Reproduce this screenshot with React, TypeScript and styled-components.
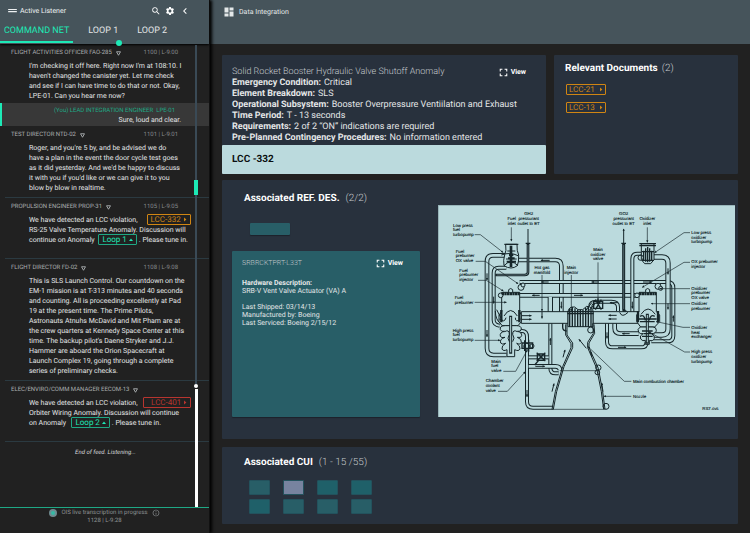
import React from "react";
import styled, { createGlobalStyle, css } from "styled-components";
import {
  MdChevronLeft,
  MdDashboard,
  MdDragHandle,
  MdFullscreen,
  MdInfoOutline,
  MdSearch,
  MdSettings,
} from "react-icons/md";

const color = {
  page: "#212121",
  bar: "#46545b",
  panel: "#28313d",
  teal: "#285e67",
  pale: "#bbdadd",
  mint: "#1de9b6",
  green: "#1fa885",
  orange: "#d08513",
  red: "#b8352f",
  ink: "#16262a",
};

const GlobalStyle = createGlobalStyle`
  * { box-sizing: border-box; }
  body {
    margin: 0;
    background: ${color.page};
    color: #e4e6e7;
    font-family: Roboto, sans-serif;
    font-size: 7px;
    line-height: 10px;
    text-rendering: geometricPrecision;
  }
  button { font: inherit; color: inherit; background: none; border: 0; padding: 0; cursor: pointer; text-rendering: inherit; }
  h1, h2, h3, p, dl, dd { margin: 0; font: inherit; }
  a { color: inherit; text-decoration: none; }
  svg { flex: none; }
`;

const Page = styled.div`
  display: grid;
  grid-template-columns: 28% 1fr;
  min-height: 100vh;
`;

/* ---------- Listener sidebar ---------- */

const Sidebar = styled.aside`
  display: flex;
  flex-direction: column;
  min-width: 0;
  z-index: 1;
  border-right: 1px solid #111;
  box-shadow: 2px 0 3px #000;
  background: ${color.page};
`;

const SidebarHeader = styled.header`
  background: ${color.bar};
  height: 44px;
  box-shadow: 0 1px 2px #000;
`;

const TitleRow = styled.div`
  display: flex;
  align-items: center;
  height: 21px;
  padding: 0 18px 0 6px;
  gap: 1px;
  color: #eef1f2;
`;

const Tools = styled.div`
  display: flex;
  align-items: center;
  gap: 4px;
  margin-left: auto;
`;

const IconButton = styled.button`
  display: flex;
  color: #fff;
`;

const Tabs = styled.nav`
  display: flex;
  height: 22px;
`;

const Tab = styled.button<{ $active?: boolean }>`
  position: relative;
  padding: 0 4px;
  margin-right: 11px;
  font-size: 9px;
  line-height: 20px;
  border-bottom: 2px solid transparent;
  ${(p) => p.$active && css`
    color: ${color.mint};
    border-color: ${color.mint};
  `}
`;

const TabDot = styled.span`
  position: absolute;
  right: 0;
  bottom: -5px;
  width: 6px;
  height: 6px;
  border-radius: 50%;
  background: ${color.mint};
`;

const Feed = styled.div`
  position: relative;
  flex: 1;
`;

const Message = styled.article<{ $roomy?: boolean }>`
  margin-left: 5px;
  padding: 4px 0 ${(p) => (p.$roomy ? 13 : 4)}px 6px;
  border-bottom: 1px solid #2b3a41;
  &:first-child {
    padding-bottom: 2px;
    border-bottom: 0;
  }
`;

const Meta = styled.header`
  display: flex;
  align-items: center;
  gap: 4px;
  padding-right: 31px;
  margin-bottom: 3px;
  font-size: 6px;
  color: #a9adaf;
  white-space: nowrap;
`;

const Time = styled.time`
  margin-left: auto;
  color: #85898b;
`;

const Speech = styled.p`
  padding-left: 18px;
  white-space: pre;
`;

const OwnMessage = styled.article`
  display: flex;
  flex-direction: column;
  align-items: flex-end;
  padding: 3px 28px 0 0;
  height: 23px;
  border-left: 2px solid ${color.mint};
  background: #383838;
`;

const OwnName = styled.span`
  padding-right: 6px;
  font-size: 6px;
  line-height: 9px;
  color: ${color.green};
`;

const tones = { orange: color.orange, red: color.red, green: color.mint };

const Tag = styled.a<{ $tone: keyof typeof tones; $wide?: boolean }>`
  margin: 0 2px;
  padding: 0 3px 0 ${(p) => (p.$wide ? 7 : 3)}px;
  border: 1px solid ${(p) => (p.$tone === "green" ? color.green : tones[p.$tone])};
  border-radius: 1px;
  font-size: 8px;
  line-height: 8px;
  color: ${(p) => tones[p.$tone]};
`;

const FeedEnd = styled.p`
  padding: 6px 0 0 2px;
  text-align: center;
  font-size: 6px;
  font-style: italic;
  color: #d5d8d9;
`;

const Rail = styled.div`
  position: absolute;
  inset: 1px 11px 0 auto;
  width: 4px;
  display: flex;
  flex-direction: column;
  align-items: center;
  pointer-events: none;
`;

const RailPart = styled.span<{ $grow?: number }>`
  width: 2px;
  flex: ${(p) => p.$grow ?? 1} 0 0;
  background: #3a4a56;
`;

const RailThumb = styled.span`
  width: 4px;
  height: 15px;
  background: ${color.mint};
`;

const RailDot = styled.span`
  width: 4px;
  height: 4px;
  margin-bottom: 1px;
  border-radius: 50%;
  background: #fff;
`;

const RailEnd = styled.span`
  width: 3px;
  height: 118px;
  background: #fff;
`;

const Status = styled.footer`
  display: flex;
  flex-direction: column;
  align-items: center;
  height: 26px;
  border-top: 1px solid ${color.green};
  font-size: 6px;
  line-height: 8px;
  color: #8d9193;
  padding-top: 1px;
`;

const StatusLine = styled.div`
  display: flex;
  align-items: center;
  gap: 4px;
`;

const LiveDot = styled.span`
  width: 8px;
  height: 8px;
  border-radius: 50%;
  border: 2px solid #6f8b90;
  background: #35b9a4;
`;

/* ---------- Data integration area ---------- */

const Main = styled.main`
  min-width: 0;
  display: flex;
  flex-direction: column;
`;

const MainHeader = styled.header`
  display: flex;
  align-items: flex-start;
  gap: 4px;
  height: 44px;
  padding: 6px 13px;
  background: ${color.bar};
  line-height: 12px;
  color: #e4e8e9;
`;

const Board = styled.div`
  display: flex;
  flex-direction: column;
  gap: 6px;
  padding: 11px 12px 9px;
`;

const TopRow = styled.div`
  display: grid;
  grid-template-columns: 324fr 184fr;
  gap: 8px;
`;

const Panel = styled.section`
  min-width: 0;
  border-radius: 1px;
  background: ${color.panel};
`;

const Anomaly = styled(Panel)`
  padding-top: 11px;
  font-size: 9px;
  line-height: 11px;
`;

const CardTitle = styled.div`
  display: flex;
  justify-content: space-between;
  align-items: center;
  height: 12px;
  white-space: nowrap;
`;

const AnomalyBody = styled.div`
  padding: 0 10px 1px;
  ${CardTitle} { padding-right: 10px; }
`;

const Light = styled.span`
  font-weight: 300;
  color: #c3c8cb;
`;

const Fact = styled.div`
  display: flex;
  gap: 3px;
  white-space: nowrap;
  dt { font-weight: 700; }
`;

const ViewButton = styled.button`
  display: flex;
  align-items: center;
  gap: 1px;
  font-size: 7px;
  line-height: 10px;
  font-weight: 700;
  color: #fff;
`;

const Limit = styled.div`
  padding: 0 10px;
  border-radius: 1px;
  background: ${color.pale};
  color: #0b0f10;
  font-size: 10px;
  font-weight: 700;
  line-height: 29px;
`;

const Heading = styled.h2`
  display: flex;
  gap: 6px;
  font-size: 10px;
  line-height: 14px;
  font-weight: 700;
  color: #fff;
  white-space: nowrap;
`;

const Documents = styled(Panel)`
  padding: 7px 11px;
  ${Heading} { gap: 4px; }
`;

const DocList = styled.div`
  display: flex;
  flex-direction: column;
  align-items: flex-start;
  gap: 7px;
  padding: 8px 1px;
`;

const DocLink = styled.a`
  display: flex;
  align-items: center;
  justify-content: space-between;
  width: 40px;
  height: 11px;
  padding: 0 2px;
  border: 1px solid ${color.orange};
  border-radius: 1px;
  font-size: 8px;
  color: ${color.orange};
`;

const References = styled(Panel)`
  display: grid;
  grid-template-columns: 188fr 297fr;
  gap: 18px;
  padding: 12px 3px 22px 10px;
`;

const RefColumn = styled.div`
  display: flex;
  flex-direction: column;
  min-width: 0;
  ${Heading} { padding-left: 12px; }
`;

const Chip = styled.button`
  width: 40px;
  height: 12px;
  margin: 17px 18px 16px;
  border-radius: 1px;
  background: ${color.teal};
  box-shadow: 0 1px 1px #1c222b;
`;

const Hardware = styled.section`
  flex: 1;
  padding: 4px 10px;
  border-radius: 1px;
  background: ${color.teal};
  box-shadow: 0 1px 1px #1c222b;
  line-height: 8px;
  ${CardTitle} { height: 16px; padding-right: 7px; }
  p { margin-top: 8px; }
`;

const Figure = styled.figure`
  margin: 13px 0 0;
  background: ${color.pale};
  svg { display: block; width: 100%; height: auto; }
`;

const Cui = styled(Panel)`
  margin-top: 2px;
  padding: 8px 22px 10px;
  ${Heading} { line-height: 15px; }
`;

const Tiles = styled.div`
  display: grid;
  grid-template-columns: repeat(4, 21px);
  gap: 4px 13px;
  padding: 10px 5px 0;
`;

const Tile = styled.button<{ $shade: string }>`
  height: 15px;
  border: 1px solid #23525d;
  border-radius: 1px;
  background: ${(p) => p.$shade};
`;

/* ---------- Small drawings ---------- */

const Nabla = () => (
  <svg width="5" height="5" viewBox="0 0 10 10" aria-hidden="true">
    <path d="M1 1.5h8L5 8.5z" fill="none" stroke="#b4b8ba" strokeWidth="1.7" />
  </svg>
);

const Caret = ({ up }: { up?: boolean }) => (
  <svg width="4" height="5" viewBox="0 0 4 5" aria-hidden="true">
    <path d={up ? "M0 4L2 1.5L4 4z" : "M1 .5L3.4 2.5L1 4.5z"} fill="currentColor" />
  </svg>
);

const View = () => (
  <ViewButton>
    <MdFullscreen size={13} />
    View
  </ViewButton>
);

/* ---------- Engine schematic ---------- */

const Pipe = ({ d, w = 12 }: { d: string; w?: number }) => (
  <>
    <path d={d} fill="none" stroke={color.ink} strokeWidth={w} />
    <path d={d} fill="none" stroke={color.pale} strokeWidth={w - 6} />
  </>
);

const labels: [number, number, string[], ("start" | "middle")?][] = [
  [45, 65, ["Low press", "fuel", "turbopump"]],
  [53, 143, ["Fuel", "preburner", "OX valve"]],
  [64, 200, ["Fuel", "preburner", "injector"]],
  [50, 282, ["Fuel", "preburner"]],
  [44, 380, ["High press", "fuel", "turbopump"]],
  [160, 473, ["Main", "fuel", "valve"]],
  [143, 532, ["Chamber", "coolant", "valve"]],
  [221, 46, ["Fuel", "inlet"], "middle"],
  [272, 31, ["GH2", "pressurant", "outlet to ET"], "middle"],
  [312, 192, ["Hot gas", "manifold"], "middle"],
  [400, 192, ["Main", "injector"], "middle"],
  [480, 138, ["Main", "oxidizer", "valve"], "middle"],
  [557, 31, ["GO2", "pressurant", "outlet to ET"], "middle"],
  [628, 46, ["Oxidizer", "inlet"], "middle"],
  [760, 87, ["Low press", "oxidizer", "turbopump"]],
  [760, 175, ["OX preburner", "injector"]],
  [760, 254, ["Oxidizer", "preburner", "OX valve"]],
  [760, 301, ["Oxidizer", "preburner"]],
  [760, 372, ["Oxidizer", "heat", "exchanger"]],
  [760, 445, ["High press", "oxidizer", "turbopump"]],
  [585, 534, ["Main combustion chamber"]],
  [585, 579, ["Nozzle"]],
  [793, 616, ["RS7.cvs"]],
];

const flow = [
  "M335 166h-26", "M332 231h-22", "M305 271h-22", "M408 271h26", "M483 231h-22",
  "M615 231h26", "M540 293h-24", "M252 332h28", "M252 343h28", "M536 331h-24",
  "M536 342h-24", "M147 205v20", "M167 275v20", "M147 375v20", "M370 290v20",
  "M583 290v20", "M690 190v18", "M690 295v18", "M337 420v-20", "M267 555v20",
  "M292 484h28", "M375 457l6-22", "M342 560l6-24", "M495 560l-4-26", "M575 386h-22",
  "M540 427h24", "M507 382v18", "M706 350v-18", "M445 430l-22-27", "M462 455l-4-15",
  "M312 320v20",
];

const leaders = [
  "M110 89H127L195 142", "M113 169H142L240 236", "M120 226H145L196 258", "M110 292H205",
  "M110 406H186", "M196 499H233L268 435", "M180 559H208L262 500", "M220 67V108",
  "M312 210V318", "M400 210V318", "M480 172V292", "M628 67V112", "M756 83H738L650 143",
  "M756 172H738L613 247", "M756 251H665", "M756 296H640", "M756 367H735L655 350",
  "M756 441H740L632 380", "M580 529H559L450 425", "M580 574H498",
];

const Engine = () => (
  <svg viewBox="0 0 891 636" role="img" aria-label="Engine flow schematic">
    <defs>
      <marker id="tip" viewBox="0 0 10 10" refX="8" refY="5" markerWidth="10" markerHeight="8" markerUnits="userSpaceOnUse" orient="auto">
        <path d="M0 1L10 5L0 9z" fill={color.ink} />
      </marker>
      <marker id="point" viewBox="0 0 10 10" refX="8" refY="5" markerWidth="8" markerHeight="8" markerUnits="userSpaceOnUse" orient="auto">
        <path d="M0 1L10 5L0 9z" fill={color.ink} />
      </marker>
    </defs>
    <path d="M1 636V1H891" fill="none" stroke="#7e989d" strokeWidth="2" />

    <Pipe d="M205 151H165Q147 151 147 169V430Q147 450 167 450H206" w={14} />
    <Pipe d="M205 188H182Q167 188 167 204V345Q167 360 185 362" />
    <Pipe d="M238 165H352Q370 165 370 183V322" w={14} />
    <Pipe d="M245 231H688Q706 231 706 249V392Q706 409 688 409H640" />
    <Pipe d="M245 271H600" w={14} />
    <Pipe d="M337 276V322" w={16} />
    <Pipe d="M610 146H598Q583 146 583 162V322" />
    <Pipe d="M648 156H672Q690 156 690 174V372Q690 390 672 390H640" w={16} />
    <Pipe d="M507 355V410Q507 427 524 427H610Q626 427 626 410" />
    <Pipe d="M530 355V370Q530 386 548 386H602" w={14} />
    <Pipe d="M457 318V305Q457 290 474 290H520Q540 290 540 306V318" />
    <Pipe d="M245 378H252Q267 378 267 396V590Q267 608 285 608H346" />
    <Pipe d="M337 355V488Q337 505 353 505H362" />
    <Pipe d="M272 457H332" />
    <Pipe d="M272 484H352Q366 484 366 496" w={14} />
    <path d="M270 115V202Q270 210 260 210H172" fill="none" stroke={color.ink} strokeWidth="8" />
    <path d="M270 120V202Q270 210 260 210H176" fill="none" stroke="#789094" strokeWidth="2" />
    <path d="M557 115V312Q557 322 566 322" fill="none" stroke={color.ink} strokeWidth="9" />
    <path d="M557 120V312" stroke="#6d858a" strokeWidth="2" />

    <g fill="none" stroke={color.ink} strokeWidth="3">
      <path d="M270 115V72M557 115V72" markerEnd="url(#tip)" />
      <path d="M263 115H277M550 115H564" strokeWidth="4" />
      <g fill={color.pale}>
        <path d="M250 320H390V355H250zM465 320H602V355H465z" />
        <path d="M191 262H245V320L250 330V350L240 362H192L183 350V330L191 320zM603 262H655V320L665 330V350L650 366H608L596 350V330L603 320z" />
        <path d="M203 118H237Q236 138 242 150Q243 170 238 182Q220 196 198 182Q195 166 200 150Q206 138 203 118z" />
        <path d="M610 116H648V164L638 176H620L610 164z" />
        <circle cx="188" cy="271" r="7" /><circle cx="249" cy="247" r="9" /><circle cx="255" cy="240" r="6" />
        <circle cx="660" cy="244" r="9" /><circle cx="668" cy="250" r="6" /><circle cx="597" cy="271" r="7" />
        <path d="M212 262V254Q218 247 224 254V262M623 262V254Q629 247 635 254V262" />
        <path d="M202 362Q184 362 187 374Q190 381 200 379Q184 382 187 394Q190 400 201 397Q184 402 188 414Q193 420 203 415Q190 422 192 432Q196 440 207 434V455H230V434Q242 440 246 432Q247 422 236 415Q247 420 250 412Q252 402 238 397Q250 400 251 392Q252 382 238 379Q250 381 250 372Q250 362 236 362z" />
        <path d="M607 366Q596 372 602 382Q608 388 615 386Q603 392 608 402Q614 410 622 406V418H634V406Q645 410 649 400Q652 392 640 386Q654 386 655 376Q655 366 645 366z" />
      </g>
      <path d="M200 380Q214 372 214 388Q206 400 214 410M238 380Q224 372 224 388Q232 400 224 410M190 150Q216 140 240 152M198 182Q218 160 240 182M204 162H236M208 138H232" />
      <path d="M199 118H241M604 116H654M604 122H654" strokeWidth="4" />
      <path d="M219 122V186" strokeWidth="8" />
      <path d="M213 150H226M210 160H230M206 170H234" strokeWidth="6" />
      <path d="M617 137V166M623 130V170M629 126V172M635 130V170M641 137V166" strokeWidth="4" />
      <path d="M612 140H648M612 166H648" strokeWidth="4" />
      <circle cx="608" cy="158" r="8" />
      <path d="M191 266H245M603 266H655" strokeWidth="9" strokeDasharray="7 1" />
      <path d="M198 333Q218 300 238 333M609 328Q630 296 652 328M184 342Q200 355 204 338M248 342Q232 355 232 338" />
      <path d="M190 315V352M244 315V352M600 318V352M660 318V352" strokeWidth="7" />
      <path d="M172 318Q172 345 190 358M176 314L192 345M545 322Q552 340 570 322" />
      <path d="M218 332V446M628 326V416" strokeWidth="9" />
      <path d="M218 336V442M628 330V412" stroke={color.pale} strokeWidth="3" />
      <path d="M606 334Q618 326 622 346M650 334Q638 326 634 346M600 342H656M606 350H650M612 378H644M616 386H640M612 394H644" strokeWidth="4" />
      <path d="M252 414H284V430H252zM260 406V438M272 404V440M298 447H320V466H298zM296 443L322 468M296 468L322 443" strokeWidth="4" />
      <path d="M290 480L302 466M374 355V366Q374 378 386 378" strokeWidth="4" />
      <circle cx="282" cy="423" r="6" /><circle cx="266" cy="424" r="9" />
      <path d="M467 290H494V310H467zM472 284L490 314M490 284L472 314M480 280V300" strokeWidth="4" />

      <path d="M390 320Q392 304 410 306L420 314H434L446 304Q466 306 465 320V365H390z" fill={color.pale} />
      <path d="M395 310V366M403 306V366M411 310V366M419 314V366M427 314V366M435 314V366M443 308V366M451 306V366M459 310V366" strokeWidth="4" />
      <path d="M388 326H467M388 320H467" strokeWidth="4" />
      <path d="M442 318L462 292M448 322L470 298" />
      <path d="M387 355V390L404 414V428L378 485L356 560L346 613M464 355L466 385L449 412V428L476 490L490 560L497 613" />
      <path d="M383 358V390L399 416V428L374 485L352 560L342 613M468 358L470 385L453 414V428L481 490L494 560L501 613" />
      <path d="M366 497H478M344 613H500" strokeWidth="2" />
      <circle cx="458" cy="375" r="9" /><circle cx="481" cy="488" r="8" /><circle cx="478" cy="502" r="7" /><circle cx="504" cy="604" r="9" />
    </g>
    <g fill="none" stroke={color.ink} strokeWidth="3">
      {flow.map((d) => <path key={d} d={d} markerEnd="url(#tip)" />)}
    </g>
    <g fill="none" stroke={color.ink} strokeWidth="2">
      {leaders.map((d) => <path key={d} d={d} markerEnd="url(#point)" />)}
    </g>
    <g fill="#0c1a1e" stroke="#0c1a1e" strokeWidth="0.4" fontFamily="Liberation Sans, sans-serif" fontSize="13">
      {labels.map(([x, y, lines, anchor]) => (
        <text key={`${x}-${y}`} y={y} textAnchor={anchor ?? "start"}>
          {lines.map((line, i) => (
            <tspan key={line} x={x} dy={i ? 14 : 0}>{line}</tspan>
          ))}
        </text>
      ))}
    </g>
  </svg>
);

/* ---------- Data ---------- */

type Entry = { who: string; time?: string; roomy?: boolean; body: React.ReactNode };

const opening: Entry = {
  who: "FLIGHT ACTIVITIES OFFICER FAO-285",
  time: "1100 | L-9:00",
  body: "I'm checking it off here. Right now I'm at 108:10. I\nhaven't changed the canister yet. Let me check\nand see if I can have time to do that or not. Okay,\nLPE-01. Can you hear me now?",
};

const later: Entry[] = [
  {
    who: "TEST DIRECTOR NTD-02",
    time: "1101 | L-9:01",
    body: "Roger, and you're 5 by, and be advised we do\nhave a plan in the event the door cycle test goes\nas it did yesterday. And we'd be happy to discuss\nit with you if you'd like or we can give it to you\nblow by blow in realtime.",
  },
  {
    who: "PROPULSION ENGINEER PROP-31",
    time: "1105 | L-9:05",
    roomy: true,
    body: (
      <>
        {"We have detected an LCC violation,    "}
        <Tag href="#lcc-332" $tone="orange">LCC-332 <Caret /></Tag>
        {"\nRS-25 Valve Temperature Anomaly. Discussion will\ncontinue on Anomaly "}
        <Tag href="#loop-1" $tone="green">Loop 1 <Caret up /></Tag>
        {". Please tune in."}
      </>
    ),
  },
  {
    who: "FLIGHT DIRECTOR FD-02",
    time: "1108 | L-9:08",
    body: "This is SLS Launch Control. Our countdown on the\nEM-1 mission is at T-313 minutes and 40 seconds\nand counting. All is proceeding excellently at Pad\n19 at the present time. The Prime Pilots,\nAstronauts Atnuhs McDavid and Mit Pham are at\nthe crew quarters at Kennedy Space Center at this\ntime. The backup pilot's Daene Stryker and J.J.\nHammer are aboard the Orion Spacecraft at\nLaunch Complex 19, going through a complete\nseries of preliminary checks.",
  },
  {
    who: "ELEC/ENVIRO/COMM MANAGER EECOM-13",
    roomy: true,
    body: (
      <>
        {"We have detected an LCC violation,  "}
        <Tag href="#lcc-401" $tone="red" $wide>LCC-401 <Caret /></Tag>
        {"\nOrbiter Wiring Anomaly. Discussion will continue\non Anomaly  "}
        <Tag href="#loop-2" $tone="green">Loop 2 <Caret up /></Tag>
        {". Please tune in."}
      </>
    ),
  },
];

const facts = [
  ["Emergency Condition:", "Critical"],
  ["Element Breakdown:", "SLS"],
  ["Operational Subsystem:", "Booster Overpressure Ventiilation and Exhaust"],
  ["Time Period:", "T - 13 seconds"],
  ["Requirements:", "2 of 2 “ON” indications are required"],
  ["Pre-Planned Contingency Procedures:", "No information entered"],
];

const tiles = ["#285e67", "#77839f", "#1f6069", "#1f6069", "#1f6069", "#285e67", "#285e67", "#285e67"];

const FeedMessage = ({ who, time, roomy, body }: Entry) => (
  <Message $roomy={roomy}>
    <Meta>
      {who} <Nabla />
      {time && <Time>{time}</Time>}
    </Meta>
    <Speech>{body}</Speech>
  </Message>
);

export default function App() {
  return (
    <>
      <GlobalStyle />
      <Page>
        <Sidebar>
          <SidebarHeader>
            <TitleRow>
              <MdDragHandle size={13} />
              <h1>Active Listener</h1>
              <Tools>
                <IconButton aria-label="Search"><MdSearch size={10} /></IconButton>
                <IconButton aria-label="Settings"><MdSettings size={10} /></IconButton>
                <IconButton aria-label="Collapse"><MdChevronLeft size={12} /></IconButton>
              </Tools>
            </TitleRow>
            <Tabs>
              <Tab $active>COMMAND NET</Tab>
              <Tab>LOOP 1<TabDot /></Tab>
              <Tab>LOOP 2</Tab>
            </Tabs>
          </SidebarHeader>
          <Feed>
            <FeedMessage {...opening} />
            <OwnMessage>
              <OwnName>(You) LEAD INTEGRATION ENGINEER&nbsp; LPE-01</OwnName>
              <p>Sure, loud and clear.</p>
            </OwnMessage>
            {later.map((m) => <FeedMessage key={m.who} {...m} />)}
            <FeedEnd>End of feed. Listening...</FeedEnd>
            <Rail>
              <RailPart $grow={135} />
              <RailThumb />
              <RailPart $grow={190} />
              <RailDot />
              <RailEnd />
            </Rail>
          </Feed>
          <Status>
            <StatusLine>
              <LiveDot />
              OIS live transcription in progress
              <MdInfoOutline size={8} />
            </StatusLine>
            <span>1128 | L-9:28</span>
          </Status>
        </Sidebar>

        <Main>
          <MainHeader>
            <MdDashboard size={12} />
            Data Integration
          </MainHeader>
          <Board>
            <TopRow>
              <Anomaly>
                <AnomalyBody>
                  <CardTitle>
                    <Light>Solid Rocket Booster Hydraulic Valve Shutoff Anomaly</Light>
                    <View />
                  </CardTitle>
                  <dl>
                    {facts.map(([term, value]) => (
                      <Fact key={term}><dt>{term}</dt><dd>{value}</dd></Fact>
                    ))}
                  </dl>
                </AnomalyBody>
                <Limit>LCC -332</Limit>
              </Anomaly>
              <Documents>
                <Heading>Relevant Documents <Light>(2)</Light></Heading>
                <DocList>
                  <DocLink href="#lcc-21">LCC-21 <Caret /></DocLink>
                  <DocLink href="#lcc-13">LCC-13 <Caret /></DocLink>
                </DocList>
              </Documents>
            </TopRow>

            <References>
              <RefColumn>
                <Heading>Associated REF. DES. <Light>(2/2)</Light></Heading>
                <Chip aria-label="Reference designator" />
                <Hardware>
                  <CardTitle>
                    <Light>SRBRCKTPRT-L33T</Light>
                    <View />
                  </CardTitle>
                  <p><b>Hardware Description:</b><br />SRB-V Vent Valve Actuator (VA) A</p>
                  <p>Last Shipped: 03/14/13<br />Manufactured by: Boeing<br />Last Serviced: Boeing 2/15/12</p>
                </Hardware>
              </RefColumn>
              <Figure><Engine /></Figure>
            </References>

            <Cui>
              <Heading>Associated CUI <Light>(1 - 15 /55)</Light></Heading>
              <Tiles>
                {tiles.map((shade, i) => (
                  <Tile key={i} $shade={shade} aria-label={`CUI ${i + 1}`} />
                ))}
              </Tiles>
            </Cui>
          </Board>
        </Main>
      </Page>
    </>
  );
}
